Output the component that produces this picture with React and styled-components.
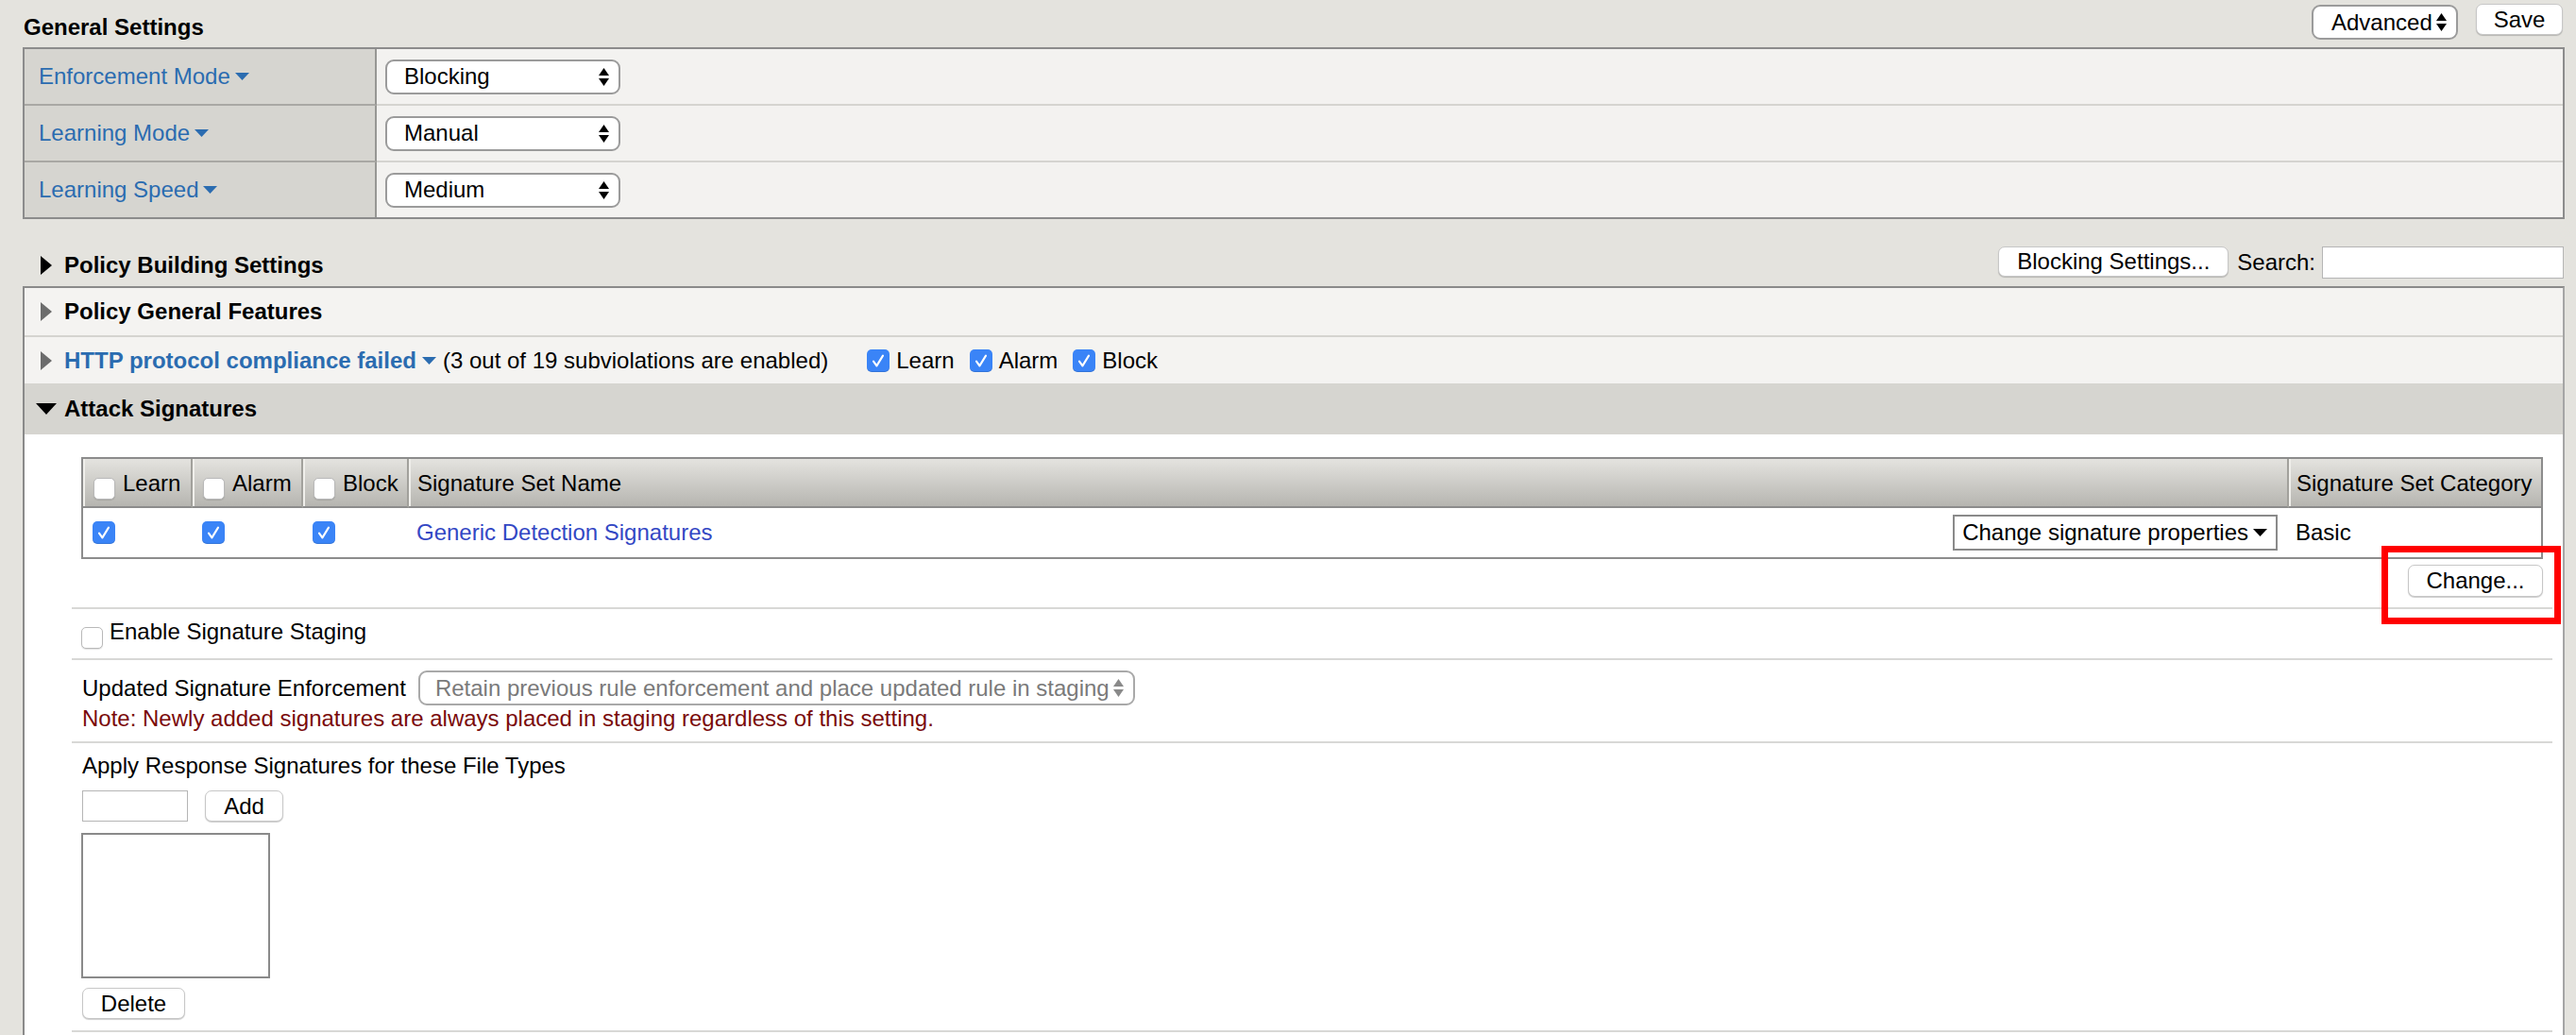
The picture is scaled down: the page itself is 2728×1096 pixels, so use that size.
import React from "react";
import styled, { createGlobalStyle } from "styled-components";

const GlobalStyle = createGlobalStyle`
  html, body {
    margin: 0;
    padding: 0;
    overflow: hidden;
    background: #e4e3de;
  }
  body {
    font-family: "Liberation Sans", Arial, Helvetica, sans-serif;
    font-size: 24px;
    line-height: 28px;
    color: #000;
  }
  * {
    box-sizing: border-box;
  }
`;

const Page = styled.div`
  padding: 0 12px 0 24px;
`;

/* ---------- top bar ---------- */

const TopBar = styled.div`
  height: 50px;
  display: flex;
  align-items: flex-start;
  justify-content: space-between;
`;

const Heading = styled.div`
  font-weight: bold;
  white-space: nowrap;
`;

const TopTitle = styled(Heading)`
  align-self: flex-end;
  padding: 0 0 7px 1px;
`;

const TopActions = styled.div`
  display: flex;
  align-items: flex-start;
  gap: 19px;
  padding-top: 4px;
  margin-right: 2px;
`;

/* ---------- form controls ---------- */

const SelectBox = styled.div`
  display: inline-flex;
  align-items: center;
  justify-content: space-between;
  flex: none;
  width: ${(p) => p.$w}px;
  height: 37px;
  margin-top: ${(p) => p.$mt || 0}px;
  padding: 0 10px 0 ${(p) => p.$pl || 18}px;
  background: #fff;
  border: 2px solid ${(p) => (p.$disabled ? "#a9a9a9" : "#9b9b9b")};
  border-radius: 9px;
  color: ${(p) => (p.$disabled ? "#7a7a7a" : "#000")};
  white-space: nowrap;
`;

const Button = styled.button`
  flex: none;
  width: ${(p) => p.$w}px;
  height: ${(p) => p.$h || 33}px;
  margin: ${(p) => p.$m || "0"};
  padding: 0;
  font: inherit;
  color: #000;
  background: #fff;
  border: 1px solid #c7c7c7;
  border-radius: 7px;
  box-shadow: 0 1px 1px rgba(0, 0, 0, 0.2);
`;

const TextInput = styled.div`
  flex: none;
  width: ${(p) => p.$w}px;
  height: ${(p) => p.$h || 33}px;
  background: #fff;
  border: 1px solid #b5b5b5;
`;

const CheckBox = styled.span`
  display: inline-flex;
  align-items: center;
  justify-content: center;
  flex: none;
  width: ${(p) => (p.$checked ? 24 : 23)}px;
  height: ${(p) => (p.$checked ? 24 : 23)}px;
  margin-top: ${(p) => p.$mt || 0}px;
  border-radius: 5px;
  background: ${(p) => (p.$checked ? "#3a84f7" : "#fff")};
  border: ${(p) => (p.$checked ? "none" : "1px solid #b9b9b9")};
  box-shadow: ${(p) =>
    p.$checked ? "inset 0 -1px 0 rgba(0,0,0,0.12)" : "0 1px 1px rgba(0,0,0,0.12)"};
`;

const IconSvg = styled.svg`
  flex: none;
  display: block;
  margin: 0 ${(p) => p.$after || 0}px 0 ${(p) => p.$before || 0}px;
`;

function Caret({ color = "#2b6cb0", before = 5, after = 0 }) {
  return (
    <IconSvg $before={before} $after={after} width="15" height="8" viewBox="0 0 15 8">
      <polygon points="0,0 15,0 7.5,8" fill={color} />
    </IconSvg>
  );
}

function UpDown({ color = "#000" }) {
  return (
    <IconSvg width="11" height="19" viewBox="0 0 11 19">
      <polygon points="0,8 5.5,0 11,8" fill={color} />
      <polygon points="0,11 11,11 5.5,19" fill={color} />
    </IconSvg>
  );
}

function Select({ width, children, disabled, pl, mt }) {
  return (
    <SelectBox $w={width} $disabled={disabled} $pl={pl} $mt={mt}>
      <span>{children}</span>
      <UpDown color={disabled ? "#8a8a8a" : "#000"} />
    </SelectBox>
  );
}

function Checkbox({ checked, mt }) {
  return (
    <CheckBox $checked={checked} $mt={mt}>
      {checked && (
        <svg width="24" height="24" viewBox="0 0 24 24">
          <path
            d="M7 12.6l3.4 4.8L17 6.6"
            fill="none"
            stroke="#fff"
            strokeWidth="2.1"
            strokeLinecap="round"
            strokeLinejoin="round"
          />
        </svg>
      )}
    </CheckBox>
  );
}

function Twisty({ open, muted }) {
  const fill = muted ? "#6c6c6c" : "#000";
  return (
    <TwistyBox $open={open}>
      {open ? (
        <svg width="22" height="12" viewBox="0 0 22 12">
          <polygon points="0,0 22,0 11,12" fill={fill} />
        </svg>
      ) : (
        <svg width="12" height="20" viewBox="0 0 12 20">
          <polygon points="0,0 12,10 0,20" fill={fill} />
        </svg>
      )}
    </TwistyBox>
  );
}

const TwistyBox = styled.span`
  display: flex;
  align-items: center;
  flex: none;
  width: 30px;
  padding-left: ${(p) => (p.$open ? 0 : 5)}px;
`;

/* ---------- general settings ---------- */

const SettingsGrid = styled.div`
  display: grid;
  grid-template-columns: 373px 1fr;
  border: 2px solid #8c8c8c;
  background: #f3f2f0;
`;

const LabelCell = styled.div`
  display: flex;
  align-items: center;
  height: ${(p) => (p.$last ? 58 : 60)}px;
  padding-left: 15px;
  background: #d6d5d0;
  border-right: 2px solid #979794;
  border-bottom: ${(p) => (p.$last ? "none" : "2px solid #a9a8a4")};
`;

const ValueCell = styled.div`
  display: flex;
  align-items: center;
  height: ${(p) => (p.$last ? 58 : 60)}px;
  padding-left: 9px;
  border-bottom: ${(p) => (p.$last ? "none" : "2px solid #d5d4d0")};
`;

const BlueText = styled.span`
  color: #2b6cb0;
  font-weight: ${(p) => (p.$bold ? "bold" : "normal")};
  white-space: nowrap;
`;

/* ---------- policy building ---------- */

const PolicyBar = styled.div`
  height: 71px;
  display: flex;
  align-items: flex-end;
  justify-content: space-between;
  padding: 0 1px 8px 14px;
`;

const TitleGroup = styled.div`
  display: flex;
  align-items: center;
`;

const SearchGroup = styled.div`
  display: flex;
  align-items: flex-end;
`;

const SearchLabel = styled.span`
  margin: 0 7px 3px 0;
`;

const Panel = styled.div`
  border-top: 2px solid #8a8a8a;
  border-left: 2px solid #8a8a8a;
  border-right: 2px solid #a5a5a5;
  background: #fff;
`;

const GroupRow = styled.div`
  display: flex;
  align-items: center;
  height: ${(p) => p.$h}px;
  padding-left: 12px;
  background: ${(p) => (p.$open ? "#d6d5d0" : "#f4f3f1")};
  border-bottom: ${(p) => (p.$rule ? "2px solid #d5d4d0" : "none")};
  white-space: nowrap;
`;

const Plain = styled.span`
  white-space: nowrap;
`;

const CheckLabel = styled.label`
  display: inline-flex;
  align-items: center;
  gap: 7px;
  margin-left: ${(p) => p.$ml}px;
`;

/* ---------- attack signatures ---------- */

const Content = styled.div`
  padding: 24px 11px 0 50px;
`;

const Section = styled.div`
  padding: ${(p) => p.$pad};
  border-top: ${(p) => (p.$first ? "none" : "2px solid #d8d8d6")};
  border-bottom: ${(p) => (p.$last ? "2px solid #d8d8d6" : "none")};
`;

const SigTable = styled.div`
  display: grid;
  grid-template-columns: 116px 117px 112px 1fr 267px;
  border: 2px solid #8c8c8c;
`;

const HeadCell = styled.div`
  display: flex;
  align-items: flex-start;
  gap: 8px;
  height: 52px;
  padding: 12px 0 0 ${(p) => p.$pl}px;
  background: linear-gradient(#e4e3df, #b6b5b0);
  border-bottom: 2px solid #8c8c8c;
  border-right: ${(p) => (p.$end ? "none" : "2px solid #a2a19c")};
  box-shadow: inset 2px 0 0 #f0efeb;
  white-space: nowrap;
`;

const DataCell = styled.div`
  display: flex;
  align-items: center;
  justify-content: space-between;
  height: 52px;
  padding: 0 ${(p) => p.$pr || 0}px 0 ${(p) => p.$pl}px;
  white-space: nowrap;
`;

const SetLink = styled.span`
  color: #3347c4;
`;

const MenuButton = styled.div`
  display: flex;
  align-items: center;
  height: 38px;
  padding: 0 9px 0 8px;
  border: 2px solid #8a8a8a;
  background: #fff;
`;

const ChangeRow = styled.div`
  display: flex;
  justify-content: flex-end;
  margin-top: 6px;
`;

const Marked = styled.div`
  position: relative;
`;

const MarkFrame = styled.div`
  position: absolute;
  top: -20px;
  right: -19px;
  bottom: -29px;
  left: -28px;
  border: 7px solid #ff0000;
  pointer-events: none;
`;

const StagingRow = styled.label`
  display: flex;
  align-items: flex-start;
  gap: 7px;
`;

const InlineRow = styled.div`
  display: flex;
  align-items: center;
  gap: ${(p) => p.$gap || 0}px;
  margin-top: ${(p) => p.$mt || 0}px;
`;

const Note = styled.div`
  color: #7a0a0a;
`;

const ListBox = styled.div`
  width: 200px;
  height: 154px;
  margin: 12px 0 0 -1px;
  background: #fff;
  border: 2px solid #8a8a8a;
`;

const modes = [
  ["Enforcement Mode", "Blocking"],
  ["Learning Mode", "Manual"],
  ["Learning Speed", "Medium"],
];

const actions = ["Learn", "Alarm", "Block"];

export default function App() {
  return (
    <>
      <GlobalStyle />
      <Page>
        <TopBar>
          <TopTitle>General Settings</TopTitle>
          <TopActions>
            <Select width={155} pl={19} mt={1}>
              Advanced
            </Select>
            <Button $w={92}>Save</Button>
          </TopActions>
        </TopBar>

        <SettingsGrid>
          {modes.map(([label, value], i) => {
            const last = i === modes.length - 1;
            return (
              <React.Fragment key={label}>
                <LabelCell $last={last}>
                  <BlueText>{label}</BlueText>
                  <Caret />
                </LabelCell>
                <ValueCell $last={last}>
                  <Select width={249}>{value}</Select>
                </ValueCell>
              </React.Fragment>
            );
          })}
        </SettingsGrid>

        <PolicyBar>
          <TitleGroup>
            <Twisty />
            <Heading>Policy Building Settings</Heading>
          </TitleGroup>
          <SearchGroup>
            <Button $w={244} $h={32} $m="0 9px 2px 0">
              Blocking Settings...
            </Button>
            <SearchLabel>Search:</SearchLabel>
            <TextInput $w={256} $h={34} />
          </SearchGroup>
        </PolicyBar>

        <Panel>
          <GroupRow $h={52} $rule>
            <Twisty muted />
            <Heading>Policy General Features</Heading>
          </GroupRow>

          <GroupRow $h={49}>
            <Twisty muted />
            <BlueText $bold>HTTP protocol compliance failed</BlueText>
            <Caret before={6} after={7} />
            <Plain>(3 out of 19 subviolations are enabled)</Plain>
            {actions.map((a, i) => (
              <CheckLabel key={a} $ml={i === 0 ? 41 : 16}>
                <Checkbox checked />
                {a}
              </CheckLabel>
            ))}
          </GroupRow>

          <GroupRow $h={54} $open>
            <Twisty open />
            <Heading>Attack Signatures</Heading>
          </GroupRow>

          <Content>
            <Section $first $pad="0 10px 11px">
              <SigTable>
                {actions.map((a) => (
                  <HeadCell key={a} $pl={11}>
                    <Checkbox mt={8} />
                    {a}
                  </HeadCell>
                ))}
                <HeadCell $pl={9}>Signature Set Name</HeadCell>
                <HeadCell $pl={8} $end>
                  Signature Set Category
                </HeadCell>

                {actions.map((a) => (
                  <DataCell key={a} $pl={10}>
                    <Checkbox checked />
                  </DataCell>
                ))}
                <DataCell $pl={8} $pr={12}>
                  <SetLink>Generic Detection Signatures</SetLink>
                  <MenuButton>
                    Change signature properties
                    <Caret color="#000" />
                  </MenuButton>
                </DataCell>
                <DataCell $pl={7}>Basic</DataCell>
              </SigTable>

              <ChangeRow>
                <Marked>
                  <Button $w={143} $h={34}>
                    Change...
                  </Button>
                  <MarkFrame />
                </Marked>
              </ChangeRow>
            </Section>

            <Section $pad="10px 10px">
              <StagingRow>
                <Checkbox mt={9} />
                Enable Signature Staging
              </StagingRow>
            </Section>

            <Section $pad="11px 10px 10px 11px">
              <InlineRow $gap={13}>
                <Plain>Updated Signature Enforcement</Plain>
                <Select width={759} pl={16} disabled>
                  Retain previous rule enforcement and place updated rule in staging
                </Select>
              </InlineRow>
              <Note>Note: Newly added signatures are always placed in staging regardless of this setting.</Note>
            </Section>

            <Section $last $pad="10px 10px 12px 11px">
              <Plain>Apply Response Signatures for these File Types</Plain>
              <InlineRow $gap={18} $mt={12}>
                <TextInput $w={112} />
                <Button $w={83}>Add</Button>
              </InlineRow>
              <ListBox />
              <Button $w={109} $m="10px 0 0 0">
                Delete
              </Button>
            </Section>
            <div style={{ height: 40 }} />
          </Content>
        </Panel>
      </Page>
    </>
  );
}
